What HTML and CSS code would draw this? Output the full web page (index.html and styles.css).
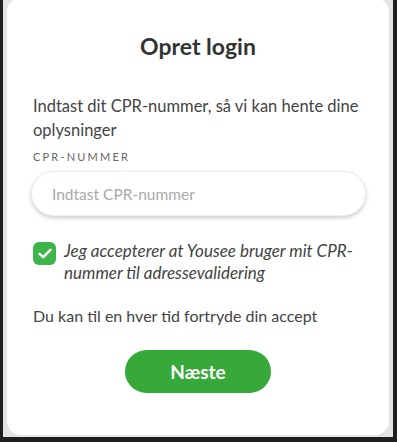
FILE: index.html
```html
<!DOCTYPE html>
<html lang="da">

<head>
    <meta charset="UTF-8">
    <meta name="viewport" content="width=device-width, initial-scale=1.0">
    <title>Opret login</title>
    <link rel="stylesheet" href="styles.css">
</head>

<body>
    <div class="frame">
        <div class="card">
            <h1 class="title">Opret login</h1>
            <p class="intro">Indtast dit CPR-nummer, så vi kan hente dine oplysninger</p>
            <label class="label" for="cpr">CPR-NUMMER</label>
            <input class="field" id="cpr" type="text" placeholder="Indtast CPR-nummer">
            <div class="accept">
                <span class="check">
                    <svg width="14" height="11" viewBox="0 0 14 11">
                        <path d="M1.5 5.8 L5.2 9.2 L12.5 1.8" fill="none" stroke="#fff" stroke-width="2.4"
                            stroke-linecap="round" stroke-linejoin="round" />
                    </svg>
                </span>
                <p class="accept-text">Jeg accepterer at Yousee bruger mit CPR-nummer til adressevalidering</p>
            </div>
            <p class="note">Du kan til en hver tid fortryde din accept</p>
            <div class="actions">
                <button class="btn">Næste</button>
            </div>
        </div>
    </div>
</body>

</html>
```

FILE: styles.css
```css
* {
    margin: 0;
    padding: 0;
    box-sizing: border-box;
}

body {
    background-color: #1f1f1f;
    font-family: Lato, "Liberation Sans", sans-serif;
    color: #444;
}

.frame {
    margin: 0 4px 0 3px;
    padding: 0 4px 2px 4px;
    height: 439px;
    background-color: #e4e4e4;
}

.card {
    height: 437px;
    margin-top: -2px;
    padding: 34px 26px 0 26px;
    background-color: #fff;
    border-radius: 14px;
}

.title {
    text-align: center;
    font-size: 23px;
    font-weight: 700;
    color: #333;
    line-height: 28px;
}

.intro {
    margin-top: 34px;
    font-size: 16.5px;
    line-height: 24px;
    color: #444;
}

.label {
    display: block;
    margin-top: 8px;
    font-size: 11px;
    letter-spacing: 2.2px;
    color: #666;
}

.field {
    display: block;
    width: 335px;
    height: 45px;
    margin-top: 8px;
    margin-left: -2px;
    padding: 0 20px;
    border: 1px solid #eee;
    border-radius: 23px;
    box-shadow: 0 2px 4px rgba(0, 0, 0, 0.2);
    font-family: Lato, "Liberation Sans", sans-serif;
    font-size: 15.5px;
    color: #333;
    outline: none;
}

.field::placeholder {
    color: #aaa;
}

.accept {
    display: flex;
    gap: 8px;
    margin-top: 24px;
}

.check {
    flex: none;
    display: flex;
    align-items: center;
    justify-content: center;
    width: 23px;
    height: 23px;
    margin-top: 2px;
    border-radius: 6px;
    background-color: #3db54a;
}

.accept-text {
    font-size: 17px;
    font-style: italic;
    line-height: 22px;
    color: #444;
}

.note {
    margin-top: 21px;
    font-size: 16px;
    line-height: 22px;
    color: #444;
}

.actions {
    display: flex;
    justify-content: center;
    margin-top: 23px;
}

.btn {
    width: 146px;
    height: 43px;
    border: none;
    border-radius: 22px;
    background-color: #37a93b;
    color: #fff;
    font-family: Lato, "Liberation Sans", sans-serif;
    font-size: 19px;
    font-weight: 700;
    cursor: pointer;
}
```
